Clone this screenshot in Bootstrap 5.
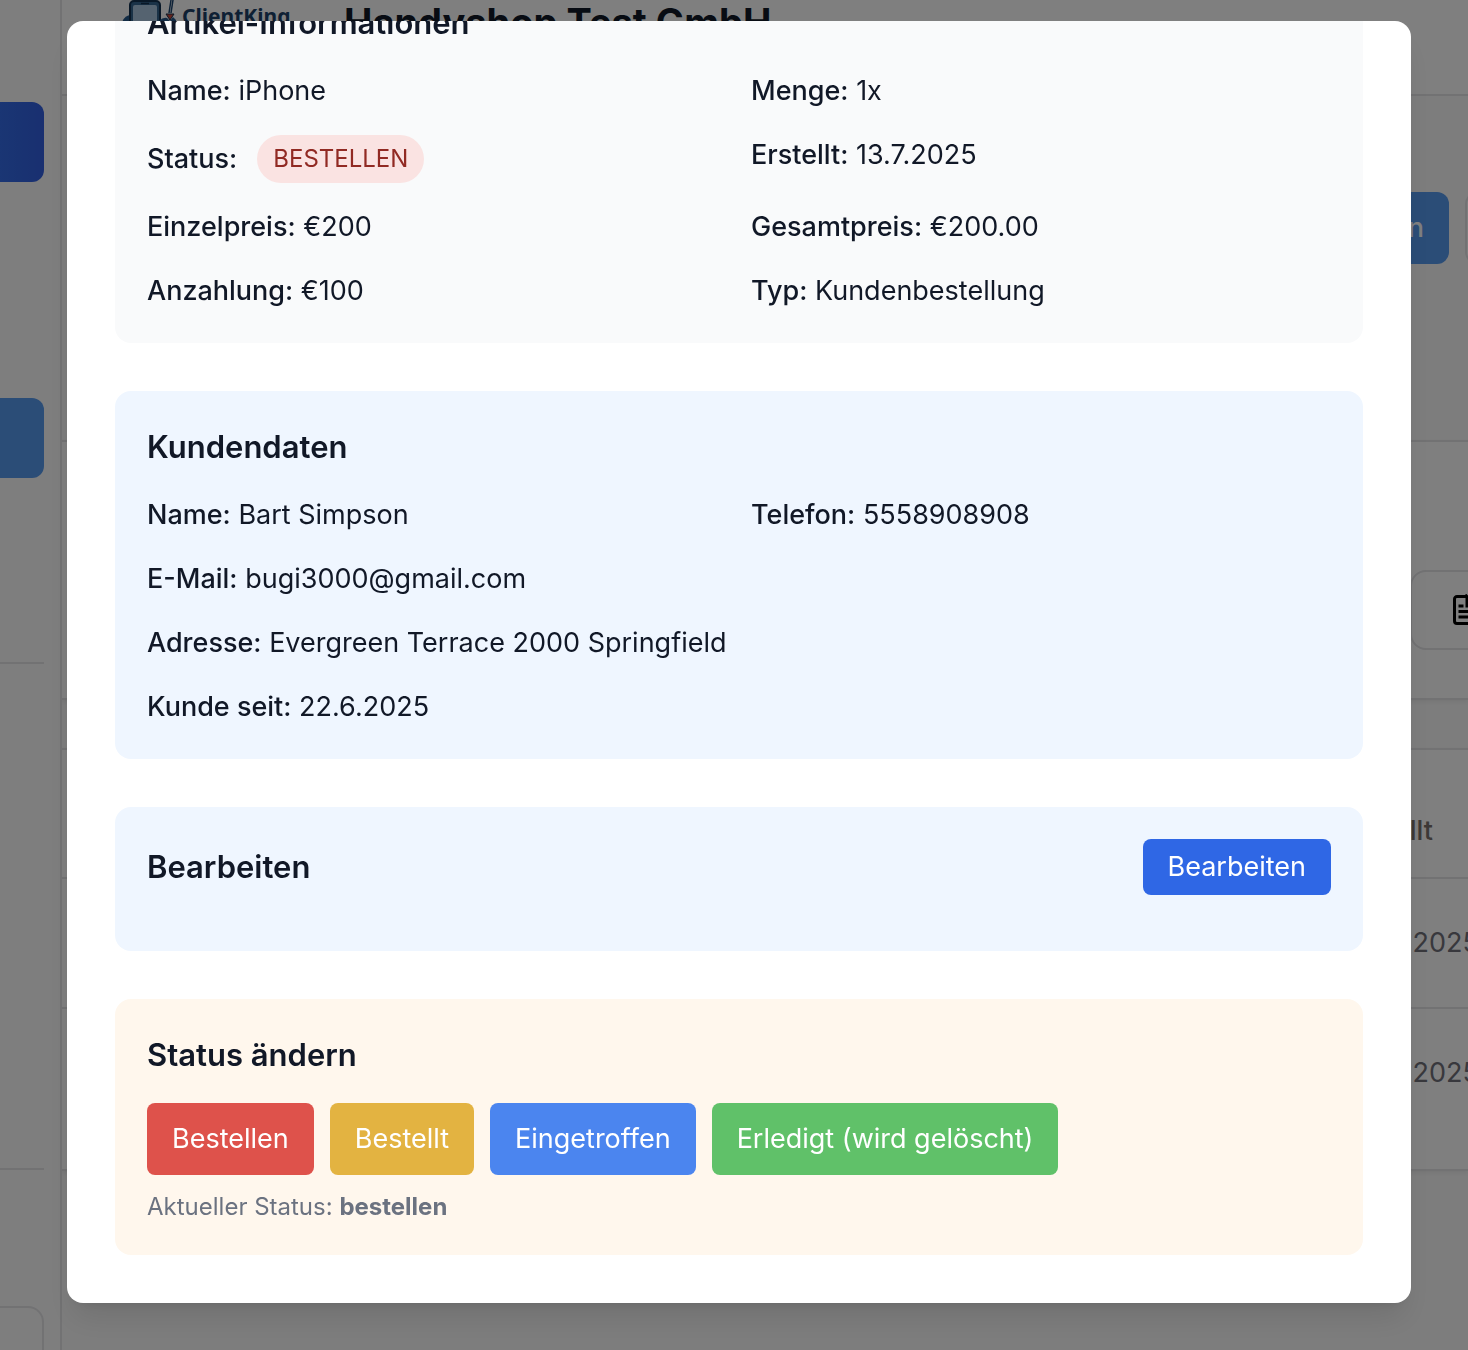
<!DOCTYPE html>
<html lang="de">
<head>
<meta charset="utf-8">
<meta name="viewport" content="width=device-width, initial-scale=1">
<title>Handyshop Test GmbH</title>
<link href="https://cdn.jsdelivr.net/npm/bootstrap@5.3.0/dist/css/bootstrap.min.css" rel="stylesheet">
<style>
  body { font-family: Inter, "Liberation Sans", sans-serif; font-size: 27px; line-height: 40px; color: #111827; background: #fafafa; height: 100vh; overflow: hidden; }

  .side-nav { width: 62px; border-right: 2px solid #e4e4e7; background: #fcfcfc; padding: 102px 16px 0 0; }
  .side-item { display: block; height: 80px; border: 0; padding: 0; border-radius: 0 12px 12px 0; background: #569aee; }
  .side-item-active { background: linear-gradient(90deg, #346ce8, #325fe1); margin-bottom: 216px; }
  .side-rule { height: 2px; background: #e4e4e7; }
  .side-rule-first { margin-top: 184px; }
  .side-rule-second { margin-top: 504px; }
  .side-box { height: 80px; margin-top: 136px; border: 2px solid #e4e4e7; border-left: 0; border-radius: 0 16px 0 0; }

  .top-bar { height: 96px; background: #fff; border-bottom: 2px solid #e4e4e7; padding-left: 60px; }
  .brand-logo { width: 168px; height: 64px; flex: none; }
  .shop-title { font-size: 38px; line-height: 44px; font-weight: 700; margin-left: 54px; }

  .tool-row { padding-top: 96px; gap: 16px; margin-right: -77px; }
  .tool-btn { height: 72px; border-radius: 12px; padding: 0 24px; font-size: 27px; font-weight: 500; }
  .tool-btn-main { background: #569aee; color: #fff; }
  .tool-btn-next { width: 80px; border: 2px solid #e4e4e7; background: #fff; }
  .sheet { background: #fff; border: solid #e4e4e7; border-width: 2px 0; box-shadow: 0 2px 4px rgba(0, 0, 0, .06); }
  .filter-sheet { margin-top: 176px; height: 260px; padding-top: 128px; }
  .export-btn { width: 200px; height: 80px; margin-right: -142px; border: 2px solid #e4e4e7; border-radius: 16px; background: #fff; padding: 0 0 0 38px; }
  .orders { margin-top: 48px; }
  .orders table { width: 100%; }
  .orders th, .orders td { text-align: right; white-space: nowrap; border-bottom: 2px solid #e4e4e7; padding: 0; }
  .orders th { height: 128px; padding: 34px 35px 0 0; font-weight: 500; color: #78716c; }
  .orders td { height: 130px; color: #71717a; }
  .orders tr:last-child td { height: 161px; padding-bottom: 32px; border: 0; }
  .date-text { display: inline-block; margin-right: -11px; }

  .overlay { background: rgba(0, 0, 0, .5); padding: 21px 57px 47px 67px; }
  .detail-box { background: #fff; border-radius: 16px; height: 100%; max-width: 1344px; padding: 0 48px 48px; gap: 48px; box-shadow: 0 20px 30px -6px rgba(0, 0, 0, .1), 0 8px 12px -8px rgba(0, 0, 0, .1); }
  .panel { flex: none; border-radius: 16px; padding: 32px; }
  .panel-gray { background: #f9fafb; }
  .panel-blue { background: #eff6ff; }
  .panel-orange { background: #fff7ed; }
  .panel-title { font-size: 31px; line-height: 48px; font-weight: 600; margin: 0; }
  .panel .panel-title + * { margin-top: 24px; }
  .pairs { display: grid; grid-template-columns: 1fr 1fr; gap: 24px; }
  .pairs strong { font-weight: 500; }
  .wide { grid-column: 1 / -1; }
  .status-pill { font-size: 24px; line-height: 32px; padding: 8px 16px; border-radius: 24px; background: #fae3e2; color: #912a23; margin-left: 20px; }
  .edit-head { margin-bottom: 24px; }
  .edit-head .panel-title + .act { margin-top: 0; height: 56px; background: #2f67e5; }
  .act { height: 72px; padding: 0 25px; border: 0; border-radius: 8px; color: #fff; font-size: 27px; line-height: 40px; }
  .act-red { background: #de524b; }
  .act-yellow { background: #e3b341; }
  .act-blue { background: #4b85ef; }
  .act-green { background: #60c169; }
  .current { font-size: 24px; line-height: 32px; color: #6b7280; margin: 16px 0 0; }
  .act:hover { color: #fff; }
</style>
</head>
<body>
<div class="d-flex h-100">
  <nav class="side-nav flex-shrink-0 overflow-hidden" aria-label="Navigation">
    <a class="side-item side-item-active" href="#" aria-label="Start"></a>
    <a class="side-item" href="#" aria-label="Bestellungen"></a>
    <div class="side-rule side-rule-first"></div>
    <div class="side-rule side-rule-second"></div>
    <div class="side-box"></div>
  </nav>
  <main class="flex-grow-1 overflow-hidden">
    <header class="top-bar d-flex align-items-start">
      <svg class="brand-logo" viewBox="0 0 168 64" role="img" aria-label="ClientKing">
        <path d="M0 22Q3 15 9 15V64H0z" fill="#25588b"/>
        <path d="M12 0h22v2H12z" fill="#8b8438"/>
        <rect x="8" y="1" width="30" height="50" rx="4" fill="#35648f" stroke="#12304f" stroke-width="2"/>
        <rect x="11" y="5" width="24" height="40" rx="2" fill="#aac6e0"/>
        <path d="M19 3.500h8" stroke="#12304f" stroke-width="1.500"/>
        <path d="M49 0l-2 13M51 0l-2 13" stroke="#1d456f" stroke-width="1.500"/>
        <path d="M44 14h8l-4 6z" fill="#c8483c" stroke="#12304f"/>
        <path d="M37 21q4-4 8-3l3 3 3-4 3 3v8H37z" fill="#25588b"/>
        <text x="60" y="24" font-family="Noto Sans, sans-serif" font-size="21" font-weight="700" fill="#1c4168">ClientKing</text>
      </svg>
      <div class="shop-title text-nowrap">Handyshop Test GmbH</div>
    </header>
    <div class="tool-row d-flex justify-content-end">
      <button class="btn tool-btn tool-btn-main" type="button">Hinzufügen</button>
      <button class="btn tool-btn tool-btn-next" type="button" aria-label="Weiter"></button>
    </div>
    <section class="sheet filter-sheet d-flex justify-content-end align-items-start">
      <button class="btn export-btn text-start d-flex align-items-center" type="button" aria-label="Export">
        <svg width="32" height="32" viewBox="0 0 32 32" fill="none" stroke="#000" stroke-width="3" aria-hidden="true">
          <path d="M17 2.500H7a2.500 2.500 0 0 0-2.500 2.500v22A2.500 2.500 0 0 0 7 29.500h18a2.500 2.500 0 0 0 2.500-2.500V12H17V2.500l10.500 9.500M8.500 12h5M8.500 17.500H24M8.500 23H24"/>
        </svg>
      </button>
    </section>
    <section class="sheet orders">
      <table>
        <thead><tr><th scope="col">Erstellt</th></tr></thead>
        <tbody>
          <tr><td><span class="date-text">13.7.2025</span></td></tr>
          <tr><td><span class="date-text">13.7.2025</span></td></tr>
        </tbody>
      </table>
    </section>
  </main>
</div>

<div class="overlay position-fixed top-0 start-0 w-100 h-100">
  <div class="detail-box mx-auto d-flex flex-column justify-content-end overflow-hidden" role="dialog" aria-modal="true" aria-label="Artikel">
    <section class="panel panel-gray">
      <h2 class="panel-title">Artikel-Informationen</h2>
      <div class="pairs">
        <div><strong>Name:</strong> iPhone</div>
        <div><strong>Menge:</strong> 1x</div>
        <div class="d-flex align-items-center"><strong>Status:</strong><span class="status-pill">BESTELLEN</span></div>
        <div><strong>Erstellt:</strong> 13.7.2025</div>
        <div><strong>Einzelpreis:</strong> €200</div>
        <div><strong>Gesamtpreis:</strong> €200.00</div>
        <div><strong>Anzahlung:</strong> €100</div>
        <div><strong>Typ:</strong> Kundenbestellung</div>
      </div>
    </section>
    <section class="panel panel-blue">
      <h2 class="panel-title">Kundendaten</h2>
      <div class="pairs">
        <div><strong>Name:</strong> Bart Simpson</div>
        <div><strong>Telefon:</strong> 5558908908</div>
        <div class="wide"><strong>E-Mail:</strong> bugi3000@gmail.com</div>
        <div class="wide"><strong>Adresse:</strong> Evergreen Terrace 2000 Springfield</div>
        <div class="wide"><strong>Kunde seit:</strong> 22.6.2025</div>
      </div>
    </section>
    <section class="panel panel-blue">
      <div class="edit-head d-flex justify-content-between align-items-center">
        <h2 class="panel-title">Bearbeiten</h2>
        <button class="btn act" type="button">Bearbeiten</button>
      </div>
    </section>
    <section class="panel panel-orange">
      <h2 class="panel-title">Status ändern</h2>
      <div class="d-flex flex-wrap gap-3">
        <button class="btn act act-red" type="button">Bestellen</button>
        <button class="btn act act-yellow" type="button">Bestellt</button>
        <button class="btn act act-blue" type="button">Eingetroffen</button>
        <button class="btn act act-green" type="button">Erledigt (wird gelöscht)</button>
      </div>
      <p class="current">Aktueller Status: <strong>bestellen</strong></p>
    </section>
  </div>
</div>
<script src="https://cdn.jsdelivr.net/npm/bootstrap@5.3.0/dist/js/bootstrap.bundle.min.js"></script>
</body>
</html>
